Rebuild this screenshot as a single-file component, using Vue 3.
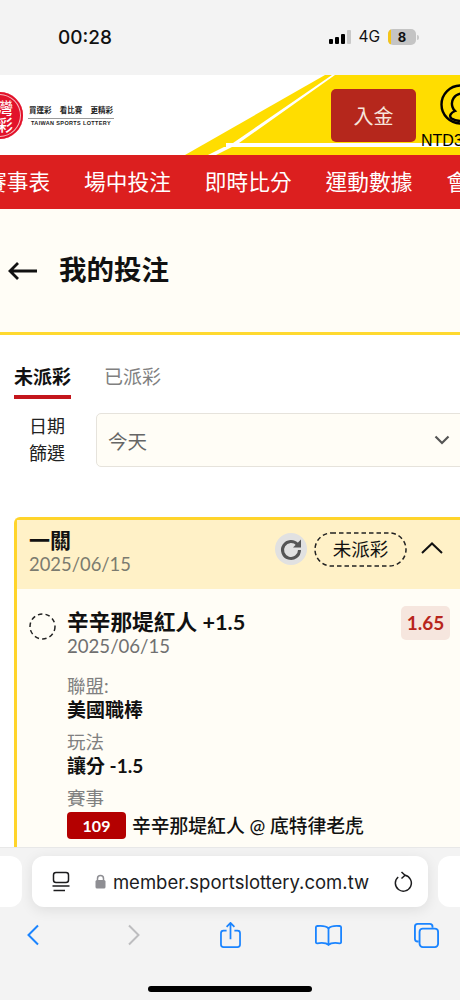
<script setup>
const navItems = ['賽事表', '場中投注', '即時比分', '運動數據', '會員中心']

const tabs = [
  { label: '未派彩', active: true },
  { label: '已派彩', active: false },
]
</script>

<template>
  <div class="phone">
    <div class="status-bar">
      <span class="clock">00:28</span>
      <div class="status-right">
        <div class="signal">
          <i class="bar b1"></i>
          <i class="bar b2"></i>
          <i class="bar b3"></i>
          <i class="bar b4"></i>
        </div>
        <span class="network">4G</span>
        <div class="battery">
          <div class="battery-body"><i class="battery-level"></i><span>8</span></div>
          <i class="battery-cap"></i>
        </div>
      </div>
    </div>

    <header class="site-header">
      <svg class="header-bg" width="460" height="80" viewBox="0 0 460 80">
        <polygon points="185,80 325,0 460,0 460,80" fill="#ffdd00" />
        <polygon points="332,0 335,0 239,68 233,68" fill="#fff" />
        <polygon points="208,80 216,80 232,72 224,72" fill="#fff" />
        <rect x="226" y="68" width="234" height="4" fill="#fff" />
      </svg>
      <div class="logo">
        <div class="logo-seal"><span>灣</span><span>彩</span></div>
        <div class="logo-text">
          <div class="logo-slogan"><span>買運彩</span><span>看比賽</span><span>更精彩</span></div>
          <div class="logo-en">TAIWAN SPORTS LOTTERY</div>
        </div>
      </div>
      <div class="header-actions">
        <button class="deposit">入金</button>
        <div class="account">
          <svg class="avatar" width="41" height="41" viewBox="0 0 41 41" fill="none" stroke="#000" stroke-width="2.400">
            <circle cx="20.500" cy="20.500" r="19" />
            <path d="M23 9.500C14 9.500 10.500 17 12.500 23c.8 2.500 2.500 4 2.500 4-4 1.500-6.500 5-3.500 7.500 3 2 8 3 14 2.500" />
            <path d="M23 9.500c8 0 10.500 8 8.500 14-1 2.500-2.500 3.500-2.500 3.500" />
          </svg>
          <span class="balance">NTD3</span>
        </div>
      </div>
    </header>

    <nav class="main-nav">
      <a v-for="item in navItems" :key="item" class="nav-item">{{ item }}</a>
    </nav>

    <main class="content">
      <div class="page-title">
        <svg width="30" height="20" viewBox="0 0 30 20" fill="none" stroke="#111" stroke-width="2.800">
          <path d="M29 10H2M10 2 2 10l8 8" />
        </svg>
        <h1>我的投注</h1>
      </div>

      <div class="tabs">
        <div v-for="tab in tabs" :key="tab.label" class="tab" :class="{ active: tab.active }">{{ tab.label }}</div>
      </div>

      <div class="filter">
        <label>日期<br />篩選</label>
        <div class="select">
          <span>今天</span>
          <svg width="16" height="10" viewBox="0 0 16 10" fill="none" stroke="#555" stroke-width="2.200">
            <path d="M1.500 1.500 8 8l6.500-6.500" />
          </svg>
        </div>
      </div>

      <section class="bet-card">
        <div class="card-head">
          <div class="head-left">
            <div class="bet-type">一關</div>
            <div class="bet-date">2025/06/15</div>
          </div>
          <div class="head-right">
            <div class="refresh">
              <svg width="24" height="24" viewBox="0 0 24 24" fill="none">
                <path d="M18.500 7.500A8.500 8.500 0 1 0 20.500 13" stroke="#555" stroke-width="3" />
                <path d="M22 2.500V10.500H14Z" fill="#555" />
              </svg>
            </div>
            <div class="status-pill">
              <svg class="pill-outline" width="93" height="35" viewBox="0 0 93 35" fill="none">
                <rect x="1" y="1" width="91" height="33" rx="16.500" stroke="#222" stroke-width="1.500" stroke-dasharray="4.500 3" />
              </svg>
              未派彩
            </div>
            <svg class="collapse" width="22" height="12" viewBox="0 0 22 12" fill="none" stroke="#111" stroke-width="2">
              <path d="M1 11 11 1.500 21 11" />
            </svg>
          </div>
        </div>

        <div class="card-body">
          <div class="selection">
            <svg class="dashed-circle" width="27" height="27" viewBox="0 0 27 27" fill="none">
              <circle cx="13.500" cy="13.500" r="12.500" stroke="#222" stroke-width="1.500" stroke-dasharray="4.500 3.200" />
            </svg>
            <div class="selection-main">
              <div class="selection-name">辛辛那堤紅人 +1.5</div>
              <div class="selection-date">2025/06/15</div>
            </div>
            <div class="odds">1.65</div>
          </div>

          <dl class="details">
            <dt>聯盟:</dt>
            <dd>美國職棒</dd>
            <dt>玩法</dt>
            <dd>讓分 -1.5</dd>
            <dt>賽事</dt>
            <dd class="match"><span class="match-no">109</span><span>辛辛那堤紅人 @ 底特律老虎</span></dd>
          </dl>
        </div>
      </section>
    </main>

    <footer class="browser-bar">
      <div class="address-row">
        <div class="side-tab"></div>
        <div class="address">
          <svg width="20" height="22" viewBox="0 0 20 22" fill="none" stroke="#1c1c1e" stroke-width="1.500">
            <rect x="2.500" y="1.500" width="15" height="10" rx="2.500" />
            <path d="M1.500 15H18.500M2.500 19.500H14" />
          </svg>
          <div class="url">
            <svg width="11" height="15" viewBox="0 0 11 15">
              <path d="M2.500 6.500V4.500a3 3 0 0 1 6 0v2" fill="none" stroke="#8e8e93" stroke-width="1.500" />
              <rect x="0.500" y="6" width="10" height="8.500" rx="1.500" fill="#8e8e93" />
            </svg>
            <span>member.sportslottery.com.tw</span>
          </div>
          <svg width="20" height="22" viewBox="0 0 20 22" fill="none" stroke="#1c1c1e" stroke-width="1.500">
            <path d="M12 4.300A8 8 0 1 1 5.200 6" />
            <path d="M8.500 1 12 4.300 8.500 7.500" />
          </svg>
        </div>
        <div class="side-tab"></div>
      </div>
      <div class="toolbar">
        <svg width="14" height="22" viewBox="0 0 14 22" fill="none" stroke="#1a84ff" stroke-width="2">
          <path d="M12 1.500 2.500 11 12 20.500" />
        </svg>
        <svg width="14" height="22" viewBox="0 0 14 22" fill="none" stroke="#bdbdbf" stroke-width="2">
          <path d="M2 1.500 11.500 11 2 20.500" />
        </svg>
        <svg width="21" height="26" viewBox="0 0 24 30" fill="none" stroke="#1a84ff" stroke-width="2">
          <path d="M7.500 10H4a3 3 0 0 0-3 3v13a3 3 0 0 0 3 3h16a3 3 0 0 0 3-3V13a3 3 0 0 0-3-3h-3.500" />
          <path d="M12 20V1.500M7.500 5.500 12 1l4.500 4.500" />
        </svg>
        <svg width="27" height="22" viewBox="0 0 30 24" fill="none" stroke="#1a84ff" stroke-width="2">
          <path d="M15 4.500C12.500 2 8 1.500 2.500 2c-1 .1-1.500.7-1.500 1.500V20c0 .8.600 1.300 1.500 1.200C8 20.500 12.500 20.500 15 23c2.500-2.500 7-2.500 12.500-1.800.9.100 1.500-.4 1.500-1.200V3.500c0-.8-.5-1.400-1.500-1.500C22 1.500 17.500 2 15 4.500Z" />
          <path d="M15 4.500V23" />
        </svg>
        <svg width="25" height="25" viewBox="0 0 27 27" fill="none" stroke="#1a84ff" stroke-width="2">
          <path d="M5 20H4a3 3 0 0 1-3-3V4a3 3 0 0 1 3-3h13a3 3 0 0 1 3 3v1" />
          <rect x="6" y="6" width="20" height="20" rx="3.500" />
        </svg>
      </div>
      <div class="home-indicator"></div>
    </footer>
  </div>
</template>

<style>
html,
body {
  margin: 0;
  background: #fff;
}
</style>

<style scoped>
.phone {
  width: 460px;
  height: 1000px;
  display: flex;
  flex-direction: column;
  overflow: hidden;
  background: #fff;
  color: #111;
  font-family: Lato, "Noto Sans CJK TC", sans-serif;
}

/* status bar */
.status-bar {
  flex: 0 0 75px;
  box-sizing: border-box;
  padding: 0 41px 0 58px;
  display: flex;
  justify-content: space-between;
  align-items: flex-start;
  background: #f3f3f3;
}

.clock {
  margin-top: 26px;
  font-family: Inter, sans-serif;
  font-size: 19px;
  font-weight: 500;
  line-height: 24px;
}

.status-right {
  display: flex;
  align-items: center;
  margin-top: 27px;
  height: 20px;
}

.signal {
  display: flex;
  align-items: flex-end;
  gap: 2px;
  width: 22px;
}

.bar {
  width: 4px;
  background: #000;
  border-radius: 1px;
}

.b1 { height: 5px; }
.b2 { height: 7px; }
.b3 { height: 10px; }
.b4 { height: 14px; background: #c9c9c9; }

.network {
  margin-left: 7px;
  font-family: Inter, sans-serif;
  font-size: 15.500px;
  line-height: 20px;
}

.battery {
  display: flex;
  align-items: center;
  margin-left: 8px;
}

.battery-body {
  position: relative;
  width: 28px;
  height: 16px;
  border-radius: 5px;
  overflow: hidden;
  background: #c4c4c4;
  font-family: Inter, sans-serif;
  font-size: 13px;
  font-weight: 700;
  line-height: 16px;
  text-align: center;
}

.battery-level {
  position: absolute;
  left: 0;
  top: 0;
  bottom: 0;
  width: 3px;
  background: #f5c518;
}

.battery-body span {
  position: relative;
}

.battery-cap {
  width: 2px;
  height: 5px;
  margin-left: 1px;
  background: #c9c9c9;
  border-radius: 0 2px 2px 0;
}

/* site header */
.site-header {
  position: relative;
  flex: 0 0 80px;
  display: flex;
  justify-content: space-between;
  overflow: hidden;
  background: #fff;
}

.header-bg {
  position: absolute;
  inset: 0;
}

.logo {
  position: relative;
  display: flex;
  align-items: center;
  margin-left: -24px;
}

.logo-seal {
  width: 47px;
  height: 47px;
  margin-top: 1px;
  box-sizing: border-box;
  border-radius: 50%;
  background: #e2122a;
  box-shadow: inset 0 0 0 2px #e2122a, inset 0 0 0 3px #f7b7bd;
  color: #fff;
  font-size: 16px;
  font-weight: 500;
  line-height: 17px;
  display: flex;
  flex-direction: column;
  align-items: flex-end;
  justify-content: center;
  padding-right: 10px;
}

.logo-seal span {
  display: block;
  height: 17px;
}

.logo-text {
  margin-left: 5px;
  width: 86px;
}

.logo-slogan {
  display: flex;
  justify-content: space-between;
  padding: 0 1px 2px;
  font-size: 7.500px;
  font-weight: 700;
  line-height: 11px;
  color: #222;
  border-bottom: 1px solid #9a9a9a;
}

.logo-en {
  margin-top: 1px;
  font-family: "Liberation Sans", sans-serif;
  font-size: 5.500px;
  font-weight: 700;
  letter-spacing: .36px;
  white-space: nowrap;
  text-align: center;
  color: #222;
}

.header-actions {
  position: relative;
  display: flex;
  align-items: flex-start;
  margin-right: -90px;
}

.deposit {
  width: 85px;
  height: 53px;
  margin-top: 14px;
  border: 0;
  border-radius: 5px;
  background: #b5271c;
  color: #f7e4dc;
  font-family: inherit;
  font-size: 20px;
}

.account {
  margin-left: 5px;
  width: 129px;
  display: flex;
  flex-direction: column;
  align-items: flex-start;
}

.avatar {
  margin: 9px 0 0 18.500px;
}

.balance {
  margin-top: 7px;
  font-family: "Liberation Sans", sans-serif;
  font-size: 16px;
  line-height: 18px;
  color: #000;
}

/* red nav */
.main-nav {
  flex: 0 0 54px;
  display: flex;
  align-items: center;
  gap: 34px;
  overflow: hidden;
  background: #dc1f1f;
  color: #fff;
}

.nav-item {
  flex: none;
  font-size: 21.700px;
  line-height: 30px;
}

.nav-item:first-child {
  margin-left: -15px;
}

/* page */
.content {
  flex: 1;
  min-height: 0;
  overflow: hidden;
}

.page-title {
  height: 123px;
  box-sizing: content-box;
  display: flex;
  align-items: center;
  gap: 21px;
  padding-left: 8px;
  background: #fffdf6;
  border-bottom: 3px solid #ffd92f;
}

.page-title h1 {
  margin: 0 0 2px;
  font-size: 27.500px;
  font-weight: 700;
  line-height: 36px;
}

.tabs {
  display: flex;
  gap: 33px;
  padding: 28px 0 0 14px;
}

.tab {
  height: 32px;
  font-size: 19px;
  line-height: 28px;
  color: #808080;
}

.tab.active {
  color: #111;
  font-weight: 700;
  border-bottom: 4px solid #c4161c;
}

.filter {
  display: flex;
  align-items: center;
  margin-top: 14px;
}

.filter label {
  flex: 0 0 96px;
  padding-right: 2px;
  box-sizing: border-box;
  text-align: center;
  font-size: 18px;
  line-height: 27px;
  color: #222;
}

.select {
  flex: 0 0 370px;
  height: 54px;
  box-sizing: border-box;
  padding: 0 15px 0 11px;
  display: flex;
  justify-content: space-between;
  align-items: center;
  background: #fffdf6;
  border: 1.500px solid #e6e3dc;
  border-radius: 5px;
  font-size: 19.500px;
  color: #666;
}

/* bet card */
.bet-card {
  margin: 50px 0 0 14px;
  width: 450px;
  min-height: 400px;
  border: 3px solid #ffd42a;
  border-right: 0;
  border-bottom: 0;
  border-radius: 6px 0 0 0;
  background: #fffdf6;
}

.card-head {
  height: 69px;
  box-sizing: border-box;
  display: flex;
  justify-content: space-between;
  padding: 7px 0 0 12px;
  background: #fff1c7;
}

.bet-type {
  font-size: 21px;
  font-weight: 700;
  line-height: 26px;
}

.bet-date {
  font-size: 18.400px;
  line-height: 22px;
  color: #7b7b6f;
}

.head-right {
  display: flex;
  align-items: flex-start;
  width: 168px;
  margin: 5px 24px 0 0;
}

.refresh {
  width: 32px;
  height: 32px;
  margin-top: 1px;
  display: flex;
  align-items: center;
  justify-content: center;
  border-radius: 50%;
  background: #e1e1e1;
}

.status-pill {
  position: relative;
  width: 93px;
  height: 35px;
  margin: 0 14px 0 7px;
  text-align: center;
  font-size: 18.500px;
  line-height: 35px;
}

.pill-outline {
  position: absolute;
  left: 0;
  top: 0;
}

.collapse {
  margin-top: 10px;
}

.card-body {
  padding: 17px 0 0 12px;
}

.selection {
  display: flex;
  align-items: flex-start;
  width: 421px;
}

.dashed-circle {
  flex: none;
  margin-top: 7px;
}

.selection-main {
  flex: 1;
  margin-left: 11px;
}

.selection-name {
  margin-top: 2px;
  font-size: 21.700px;
  font-weight: 700;
  line-height: 28px;
}

.selection-date {
  font-size: 18.600px;
  line-height: 20px;
  color: #707070;
}

.odds {
  width: 49px;
  height: 34px;
  border-radius: 5px;
  background: #f6e6de;
  color: #b8251c;
  font-size: 19px;
  font-weight: 700;
  line-height: 34px;
  text-align: center;
}

.details {
  margin: 18px 0 0 38px;
}

.details dt {
  font-size: 18.500px;
  line-height: 24px;
  color: #808080;
}

.details dd {
  margin: 0 0 8px;
  font-size: 19px;
  font-weight: 700;
  line-height: 24px;
}

.details dd.match {
  display: flex;
  align-items: center;
  gap: 6px;
  margin-top: 2px;
  font-size: 18.800px;
  font-weight: 500;
}

.match-no {
  width: 59px;
  height: 27px;
  border-radius: 4px;
  background: #b40000;
  color: #fff;
  font-size: 16px;
  font-weight: 700;
  line-height: 27px;
  text-align: center;
}

/* safari chrome */
.browser-bar {
  flex: 0 0 153px;
  box-sizing: border-box;
  padding-top: 8px;
  display: flex;
  flex-direction: column;
  background: #f3f3f3;
  border-top: 1px solid #e8e8e8;
}

.address-row {
  display: flex;
  gap: 10px;
  margin-left: -78px;
  width: 616px;
}

.side-tab {
  flex: 0 0 100px;
  height: 51px;
  border-radius: 12px;
  background: #fff;
}

.address {
  flex: 0 0 396px;
  height: 51px;
  box-sizing: border-box;
  padding: 0 15px 0 19px;
  display: flex;
  align-items: center;
  justify-content: space-between;
  border-radius: 12px;
  background: #fff;
  box-shadow: 0 3px 14px rgba(0, 0, 0, .09);
}

.url {
  display: flex;
  align-items: center;
  gap: 7px;
  font-family: Inter, sans-serif;
  font-size: 18.500px;
  color: #1c1c1e;
}

.toolbar {
  display: grid;
  grid-template-columns: 66px 136px 56px 140px 56px;
  justify-items: center;
  align-items: center;
  height: 30px;
  margin-top: 13px;
}

.home-indicator {
  width: 164px;
  height: 6px;
  margin: 36px auto 0;
  border-radius: 3px;
  background: #000;
}
</style>
